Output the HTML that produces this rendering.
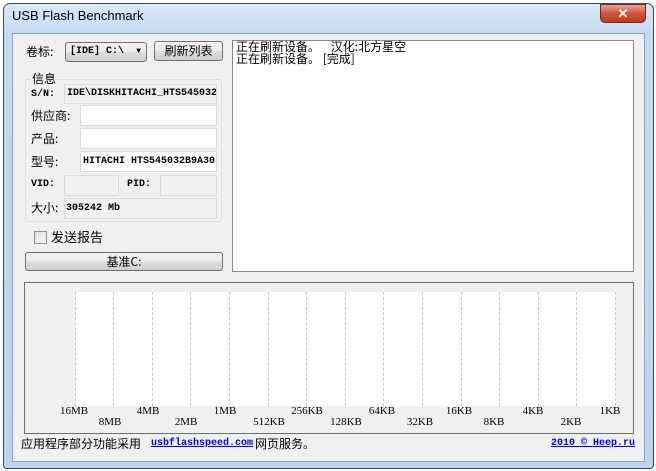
<!DOCTYPE html>
<html><head><meta charset="utf-8"><style>
*{margin:0;padding:0;box-sizing:border-box}
body{width:656px;height:471px;background:#fff;position:relative;overflow:hidden;font-family:"Noto Sans CJK SC",sans-serif;font-size:12px;color:#000}
.a{position:absolute}
.frame{left:3px;top:3px;width:651px;height:466px;border:1px solid #3c4a5a;border-radius:7px 7px 4px 4px;background:linear-gradient(#dbe9f8,#c4daf2 30px,#bcd4ee);}
.client{left:12px;top:33px;width:633px;height:429px;background:#f0f0f0;border:1px solid #8aa0bc}
.mono{font-family:"Liberation Mono",monospace;font-size:10px;font-weight:bold}
.cjk{font-family:"Noto Sans CJK SC",sans-serif;font-size:12px;line-height:14px}
.btn{border:1px solid #707070;border-radius:3px;background:linear-gradient(#f2f2f2,#ebebeb 50%,#dddddd 50%,#cfcfcf);text-align:center}
.edit{background:#fff;border:1px solid #d5dbe3}
.ro{background:#f0f0f0;border:1px solid #d5dbe3}
.lbl{font-size:10px;font-family:"Liberation Mono",monospace;font-weight:bold}
.g{position:absolute;top:292px;height:114px;border-left:1px dashed #c8c8c8;width:0}
.t{position:absolute;font-family:"Liberation Serif",serif;font-size:11px;transform:translateX(-50%)}
</style></head><body>
<div class="a frame"></div>
<div class="a" style="left:12px;top:8px;font-family:'Liberation Sans',sans-serif;font-size:13px;color:#000">USB Flash Benchmark</div>
<div class="a" style="left:600px;top:4px;width:46px;height:19px;border:1px solid #6b2a24;border-radius:0 0 5px 5px;background:linear-gradient(#e8a593,#d0533d 50%,#c03a22);color:#fff;text-align:center;font:bold 13px 'Liberation Sans',sans-serif;line-height:17px">✕</div>
<div class="a client"></div>

<div class="a cjk" style="left:26px;top:45px">卷标:</div>
<div class="a btn mono" style="left:65px;top:42px;width:82px;height:20px;line-height:18px;text-align:left;padding-left:4px;border-radius:3px">[IDE] C:\ <span style="position:absolute;right:5px;font-size:8px">▼</span></div>
<div class="a btn cjk" style="left:154px;top:41px;width:69px;height:20px;line-height:18px">刷新列表</div>

<div class="a" style="left:25px;top:79px;width:197px;height:143px;border:1px solid #d5dfe5;border-radius:3px"></div>
<div class="a cjk" style="left:31px;top:72px;background:#f0f0f0;padding:0 1px">信息</div>
<div class="a lbl" style="left:31px;top:89px">S/N:</div>
<div class="a ro mono" style="left:64px;top:84px;width:153px;height:20px;line-height:18px;padding-left:2px;overflow:hidden;white-space:nowrap">IDE\DISKHITACHI_HTS545032</div>
<div class="a cjk" style="left:31px;top:109px">供应商:</div>
<div class="a edit" style="left:80px;top:105px;width:137px;height:21px"></div>
<div class="a cjk" style="left:31px;top:132px">产品:</div>
<div class="a edit" style="left:80px;top:128px;width:137px;height:21px"></div>
<div class="a cjk" style="left:31px;top:155px">型号:</div>
<div class="a edit mono" style="left:80px;top:151px;width:137px;height:21px;line-height:19px;padding-left:2px;overflow:hidden;white-space:nowrap">HITACHI HTS545032B9A30</div>
<div class="a lbl" style="left:31px;top:179px">VID:</div>
<div class="a ro" style="left:64px;top:175px;width:55px;height:21px"></div>
<div class="a lbl" style="left:127px;top:179px">PID:</div>
<div class="a ro" style="left:160px;top:175px;width:57px;height:21px"></div>
<div class="a cjk" style="left:31px;top:201px">大小:</div>
<div class="a ro mono" style="left:64px;top:198px;width:153px;height:21px;line-height:19px;padding-left:1px">305242 Mb</div>

<div class="a" style="left:34px;top:231px;width:13px;height:13px;border:1px solid #8e8f8f;background:linear-gradient(135deg,#dcdcdc,#fafafa)"></div>
<div class="a cjk" style="left:51px;top:230px;font-size:13px">发送报告</div>
<div class="a btn cjk" style="left:25px;top:252px;width:198px;height:19px;line-height:17px">基准C:</div>

<div class="a" style="left:232px;top:40px;width:402px;height:232px;background:#fff;border:1px solid #828790"></div>
<div class="a cjk" style="left:236px;top:41px;line-height:12px;font-size:12px;white-space:pre">正在刷新设备。    汉化:北方星空
正在刷新设备。 [完成]</div>

<div class="a" style="left:24px;top:282px;width:610px;height:152px;border:1px solid #707070;background:#f0f0f0"></div>
<div class="a" style="left:75px;top:292px;width:541px;height:114px;background:#fff"></div>
<div class="g" style="left:75px"></div><div class="g" style="left:113px"></div><div class="g" style="left:152px"></div><div class="g" style="left:190px"></div><div class="g" style="left:229px"></div><div class="g" style="left:268px"></div><div class="g" style="left:306px"></div><div class="g" style="left:345px"></div><div class="g" style="left:383px"></div><div class="g" style="left:422px"></div><div class="g" style="left:461px"></div><div class="g" style="left:499px"></div><div class="g" style="left:538px"></div><div class="g" style="left:576px"></div><div class="g" style="left:615px"></div>
<div class="t" style="left:74px;top:405px">16MB</div>
<div class="t" style="left:110px;top:416px">8MB</div>
<div class="t" style="left:148px;top:405px">4MB</div>
<div class="t" style="left:186px;top:416px">2MB</div>
<div class="t" style="left:225px;top:405px">1MB</div>
<div class="t" style="left:269px;top:416px">512KB</div>
<div class="t" style="left:307px;top:405px">256KB</div>
<div class="t" style="left:346px;top:416px">128KB</div>
<div class="t" style="left:382px;top:405px">64KB</div>
<div class="t" style="left:420px;top:416px">32KB</div>
<div class="t" style="left:459px;top:405px">16KB</div>
<div class="t" style="left:494px;top:416px">8KB</div>
<div class="t" style="left:533px;top:405px">4KB</div>
<div class="t" style="left:571px;top:416px">2KB</div>
<div class="t" style="left:610px;top:405px">1KB</div>

<div class="a cjk" style="left:21px;top:437px">应用程序部分功能采用</div>
<div class="a mono" style="left:151px;top:438px;color:#0000ee;text-decoration:underline">usbflashspeed.com</div>
<div class="a cjk" style="left:255px;top:437px">网页服务。</div>
<div class="a mono" style="left:551px;top:438px;color:#0000ee;text-decoration:underline">2010 © Heep.ru</div>
</body></html>
